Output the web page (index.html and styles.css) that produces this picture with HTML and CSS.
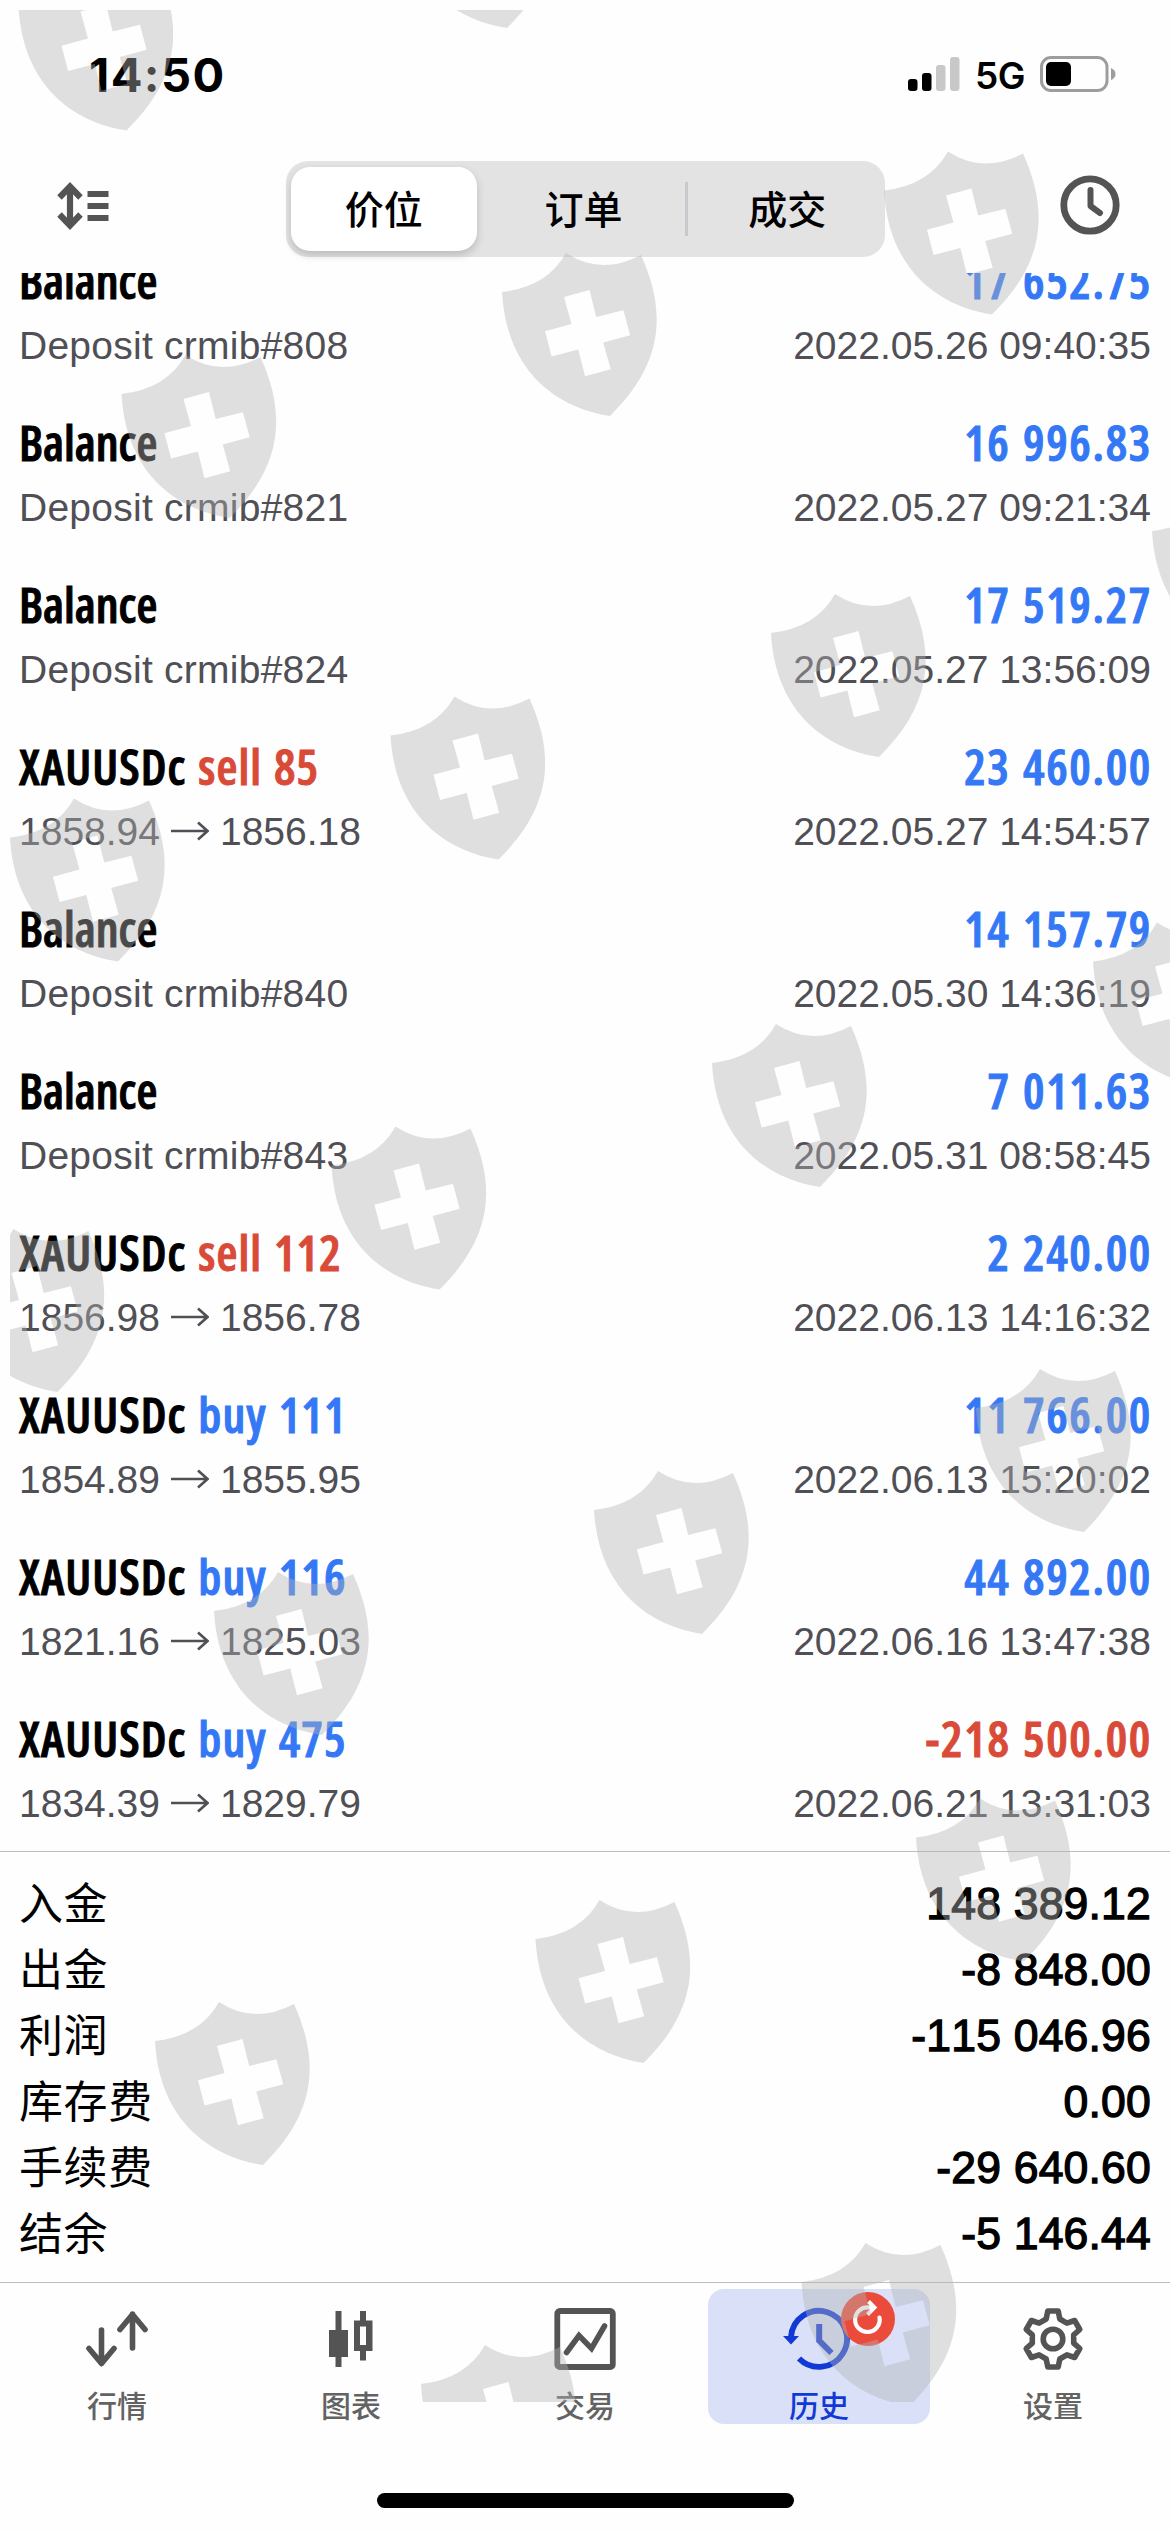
FILE: index.html
```html
<!DOCTYPE html>
<html lang="zh-CN">
<head>
    <meta charset="UTF-8">
    <meta name="viewport" content="width=device-width, initial-scale=1.0">
    <title>历史</title>
    <link rel="stylesheet" href="styles.css">
</head>
<body>
    <div class="screen">
        <div class="status-bar">
            <span class="time">14:50</span>
            <div class="status-right">
                <svg class="signal" width="52" height="34" viewBox="0 0 52 34">
                    <rect x="0" y="22" width="9.5" height="12" rx="3"/>
                    <rect x="14" y="16" width="9.5" height="18" rx="3"/>
                    <rect class="off" x="28" y="8" width="9.5" height="26" rx="3"/>
                    <rect class="off" x="42" y="0" width="9.5" height="34" rx="3"/>
                </svg>
                <span class="network">5G</span>
                <svg class="battery" width="76" height="36" viewBox="0 0 76 36">
                    <rect x="1.5" y="1.5" width="65.5" height="33" rx="9.5" fill="none" stroke="#9d9d9d" stroke-width="3"/>
                    <rect x="6" y="6" width="25" height="24" rx="5"/>
                    <path d="M71 12 Q75.5 14 75.5 18 Q75.5 22 71 24 Z" fill="#9d9d9d"/>
                </svg>
            </div>
        </div>

        <div class="toolbar">
            <svg class="sort-icon" width="54" height="50" viewBox="0 0 54 50">
                <path d="M13 5 V45 M2.5 16.5 L13 5.5 L23.5 16.5 M2.5 33.5 L13 44.5 L23.5 33.5" fill="none" stroke="#545454" stroke-width="6.2"/>
                <path d="M30.5 10 h21 v6 h-21 z M30.5 22 h21 v6 h-21 z M30.5 34 h21 v6 h-21 z" fill="#545454"/>
            </svg>
            <div class="segments">
                <div class="segment selected">价位</div>
                <div class="segment">订单</div>
                <div class="divider"></div>
                <div class="segment">成交</div>
            </div>
            <svg class="clock-icon" width="60" height="60" viewBox="0 0 60 60">
                <circle cx="30" cy="30" r="26.2" fill="none" stroke="#545454" stroke-width="6.8"/>
                <path d="M30.5 15 V31 L40 38" fill="none" stroke="#545454" stroke-width="6" stroke-linecap="round" stroke-linejoin="round"/>
            </svg>
        </div>

        <div class="history">
            <div class="deal">
                <div class="line main"><span class="name">Balance</span><span class="amount">17 652.75</span></div>
                <div class="line sub"><span class="comment">Deposit crmib#808</span><span>2022.05.26 09:40:35</span></div>
            </div>
            <div class="deal">
                <div class="line main"><span class="name">Balance</span><span class="amount">16 996.83</span></div>
                <div class="line sub"><span class="comment">Deposit crmib#821</span><span>2022.05.27 09:21:34</span></div>
            </div>
            <div class="deal">
                <div class="line main"><span class="name">Balance</span><span class="amount">17 519.27</span></div>
                <div class="line sub"><span class="comment">Deposit crmib#824</span><span>2022.05.27 13:56:09</span></div>
            </div>
            <div class="deal">
                <div class="line main"><span class="name trade">XAUUSDc <b class="sell">sell 85</b></span><span class="amount">23 460.00</span></div>
                <div class="line sub"><span>1858.94<svg class="arrow" viewBox="0 0 38 20"><path d="M0 10 H36 M27 1.5 L36.5 10 L27 18.5"/></svg>1856.18</span><span>2022.05.27 14:54:57</span></div>
            </div>
            <div class="deal">
                <div class="line main"><span class="name">Balance</span><span class="amount">14 157.79</span></div>
                <div class="line sub"><span class="comment">Deposit crmib#840</span><span>2022.05.30 14:36:19</span></div>
            </div>
            <div class="deal">
                <div class="line main"><span class="name">Balance</span><span class="amount">7 011.63</span></div>
                <div class="line sub"><span class="comment">Deposit crmib#843</span><span>2022.05.31 08:58:45</span></div>
            </div>
            <div class="deal">
                <div class="line main"><span class="name trade">XAUUSDc <b class="sell">sell 112</b></span><span class="amount">2 240.00</span></div>
                <div class="line sub"><span>1856.98<svg class="arrow" viewBox="0 0 38 20"><path d="M0 10 H36 M27 1.5 L36.5 10 L27 18.5"/></svg>1856.78</span><span>2022.06.13 14:16:32</span></div>
            </div>
            <div class="deal">
                <div class="line main"><span class="name trade">XAUUSDc <b class="buy">buy 111</b></span><span class="amount">11 766.00</span></div>
                <div class="line sub"><span>1854.89<svg class="arrow" viewBox="0 0 38 20"><path d="M0 10 H36 M27 1.5 L36.5 10 L27 18.5"/></svg>1855.95</span><span>2022.06.13 15:20:02</span></div>
            </div>
            <div class="deal">
                <div class="line main"><span class="name trade">XAUUSDc <b class="buy">buy 116</b></span><span class="amount">44 892.00</span></div>
                <div class="line sub"><span>1821.16<svg class="arrow" viewBox="0 0 38 20"><path d="M0 10 H36 M27 1.5 L36.5 10 L27 18.5"/></svg>1825.03</span><span>2022.06.16 13:47:38</span></div>
            </div>
            <div class="deal">
                <div class="line main"><span class="name trade">XAUUSDc <b class="buy">buy 475</b></span><span class="amount loss">-218 500.00</span></div>
                <div class="line sub"><span>1834.39<svg class="arrow" viewBox="0 0 38 20"><path d="M0 10 H36 M27 1.5 L36.5 10 L27 18.5"/></svg>1829.79</span><span>2022.06.21 13:31:03</span></div>
            </div>
        </div>

        <div class="summary">
            <div class="total"><span class="label">入金</span><span class="value">148 389.12</span></div>
            <div class="total"><span class="label">出金</span><span class="value">-8 848.00</span></div>
            <div class="total"><span class="label">利润</span><span class="value">-115 046.96</span></div>
            <div class="total"><span class="label">库存费</span><span class="value">0.00</span></div>
            <div class="total"><span class="label">手续费</span><span class="value">-29 640.60</span></div>
            <div class="total"><span class="label">结余</span><span class="value">-5 146.44</span></div>
        </div>

        <div class="tab-bar">
            <div class="tab">
                <svg width="64" height="64" viewBox="-32 -32 64 64">
                    <path d="M-15.5 -9 V24 M-28 9.5 L-15.5 24.5 L-3 9.5 M15.5 9 V-25 M3 -9.5 L15.5 -24.5 L28 -9.5" fill="none" stroke="#545454" stroke-width="5.6" stroke-linecap="round" stroke-linejoin="round"/>
                </svg>
                <span>行情</span>
            </div>
            <div class="tab">
                <svg width="64" height="64" viewBox="-32 -32 64 64">
                    <path d="M-15.5 -28 h6 v19 h6.5 v27 h-6.5 v10 h-6 v-10 h-6.5 v-27 h6.5 z" fill="#545454"/>
                    <path d="M9 -28 h6 v9.5 h6.5 v30.5 h-6.5 v9.5 h-6 v-9.500 h-6 v-30.500 h6 z M9 -12.500 v18.500 h6 v-18.500 z" fill="#545454" fill-rule="evenodd"/>
                </svg>
                <span>图表</span>
            </div>
            <div class="tab">
                <svg width="64" height="64" viewBox="-32 -32 64 64">
                    <rect x="-27.7" y="-28" width="55.5" height="56" rx="2.5" fill="none" stroke="#545454" stroke-width="5.8"/>
                    <path d="M-18.5 13.5 L-6 -3.5 L6.5 9.5 L19.5 -13" fill="none" stroke="#545454" stroke-width="5.6" stroke-linecap="round"/>
                </svg>
                <span>交易</span>
            </div>
            <div class="tab active">
                <svg width="76" height="64" viewBox="-38 -32 76 64">
                    <path d="M-20 19.5 A28 28 0 1 0 -28 -2" fill="none" stroke="#1139d6" stroke-width="5.8"/>
                    <path d="M-36 -3 H-20 L-28 5.5 Z" fill="#1139d6"/>
                    <path d="M0.2 -15 V1.5 L12.5 14" fill="none" stroke="#1139d6" stroke-width="6"/>
                </svg>
                <svg class="badge" width="54" height="54" viewBox="-27 -27 54 54">
                    <circle r="27" fill="#ea4b3a"/>
                    <path d="M11.5 -1.5 A12.3 12.3 0 1 1 1 -11.5 H5" fill="none" stroke="#fff" stroke-width="4.2" stroke-linecap="round"/>
                    <path d="M0.5 -17.5 L6.5 -11.5 L-0.5 -4.5" fill="none" stroke="#fff" stroke-width="4"/>
                </svg>
                <span>历史</span>
            </div>
            <div class="tab">
                <svg width="64" height="64" viewBox="-32 -32 64 64">
                    <polygon points="-5.2,-28 5.2,-28 6.8,-20 13.9,-15.9 21.6,-18.5 26.8,-9.5 20.7,-4.1 20.7,4.1 26.8,9.5 21.6,18.5 13.9,15.9 6.8,20 5.2,28 -5.2,28 -6.8,20 -13.9,15.9 -21.6,18.5 -26.8,9.5 -20.7,4.1 -20.7,-4.1 -26.8,-9.5 -21.6,-18.5 -13.9,-15.9 -6.8,-20" fill="none" stroke="#545454" stroke-width="5.6" stroke-linejoin="round"/>
                    <circle r="9.8" fill="none" stroke="#545454" stroke-width="5.6"/>
                </svg>
                <span>设置</span>
            </div>
        </div>
        <div class="home-indicator"></div>
    </div>

    <!-- shield watermark over the whole screen -->
    <svg class="watermark" width="1160" height="2392" viewBox="10 10 1160 2392">
        <defs>
            <path id="shield" fill-rule="evenodd" d="M0 0 Q45 -5 64 -39 Q99 -16 139 -37 C167 25 158 75 108 124 C50 115 4 75 0 0 Z
                M62 5 L69.5 32 L43 39.2 L49.6 64.5 L76.3 57.4 L83 84.2 L108.7 77.3 L101.2 50.5 L128.2 43.2 L121.4 18.3 L94.2 24.9 L87.5 -1.9 Z"/>
        </defs>
        <use href="#shield" x="18.5" y="6.5"/>
        <use href="#shield" x="399" y="-96"/>
        <use href="#shield" x="884" y="190.5"/>
        <use href="#shield" x="502" y="292"/>
        <use href="#shield" x="121.5" y="394"/>
        <use href="#shield" x="1152" y="531"/>
        <use href="#shield" x="771" y="633"/>
        <use href="#shield" x="390.5" y="735.5"/>
        <use href="#shield" x="10" y="837.5"/>
        <use href="#shield" x="1093" y="961.5"/>
        <use href="#shield" x="712" y="1063"/>
        <use href="#shield" x="331.5" y="1165.5"/>
        <use href="#shield" x="-50.5" y="1268"/>
        <use href="#shield" x="976" y="1408"/>
        <use href="#shield" x="594" y="1510"/>
        <use href="#shield" x="214" y="1611"/>
        <use href="#shield" x="916" y="1837.5"/>
        <use href="#shield" x="535.5" y="1939"/>
        <use href="#shield" x="155" y="2041"/>
        <use href="#shield" x="801.5" y="2282"/>
        <use href="#shield" x="421" y="2384"/>
    </svg>
</body>
</html>
```
FILE: styles.css
```css
body {
    margin: 0;
    background: #fefefe;
    color: #000;
    font-family: "Liberation Sans", "Noto Sans CJK SC", sans-serif;
    font-kerning: none;
}
.screen {
    width: 1170px;
    height: 2532px;
    display: flex;
    flex-direction: column;
    overflow: hidden;
}

/* status bar */
.status-bar {
    box-sizing: border-box;
    height: 141px;
    padding: 46px 54px 0 89px;
    display: flex;
    justify-content: space-between;
    align-items: flex-start;
    font-family: Inter, sans-serif;
}
.time {
    font-size: 47px;
    font-weight: 700;
    line-height: 57px;
    letter-spacing: 1.4px;
}
.status-right {
    display: flex;
    align-items: center;
    height: 56px;
}
.signal .off {
    fill: #c8c8c8;
}
.network {
    margin: 2px 15px 0 15px;
    font-size: 37px;
    font-weight: 600;
    letter-spacing: -0.5px;
}

/* toolbar */
.toolbar {
    box-sizing: border-box;
    height: 132px;
    padding: 20px 50px 0 57px;
    display: flex;
    justify-content: space-between;
    align-items: flex-start;
}
.sort-icon {
    margin-top: 20px;
}
.clock-icon {
    margin-top: 14px;
}
.segments {
    box-sizing: border-box;
    width: 599px;
    height: 96px;
    padding: 6px 5px;
    display: flex;
    align-items: center;
    background: #e3e3e3;
    border-radius: 22px;
}
.segment {
    width: 186px;
    height: 84px;
    margin-right: 14px;
    border-radius: 19px;
    text-align: center;
    font: 500 39px/80px "Noto Sans CJK SC", sans-serif;
}
.segment:last-child {
    margin: 0 0 0 6px;
}
.segment.selected {
    background: #fff;
    box-shadow: 0 4px 9px rgba(0, 0, 0, 0.18);
}
.divider {
    width: 3px;
    height: 54px;
    margin-left: -5px;
    background: #c8c8cd;
}

/* deals list, scrolled to the bottom */
.history {
    height: 1578px;
    display: flex;
    flex-direction: column;
    justify-content: flex-end;
    overflow: hidden;
}
.deal {
    box-sizing: border-box;
    flex: none;
    height: 162px;
    padding: 18px 19px 0;
}
.line {
    display: flex;
    justify-content: space-between;
}
.main {
    height: 66px;
    line-height: 64px;
    font-family: "Open Sans", sans-serif;
    font-size: 48px;
    font-weight: 600;
    font-stretch: 75%;
    word-spacing: 2px;
    -webkit-text-stroke: 1px;
}
.main b {
    font-weight: inherit;
}
.trade {
    letter-spacing: 1.1px;
}
.amount {
    margin-right: -1px;
    letter-spacing: 1.7px;
}
.amount, .buy {
    color: #3478f6;
}
.sell, .loss {
    color: #d94a38;
}
.sub {
    height: 62px;
    line-height: 62px;
    font-size: 39px;
    color: #4f4f55;
}
.comment {
    letter-spacing: 0.25px;
}
.arrow {
    width: 38px;
    height: 20px;
    margin: 0 11px 4px;
}
.arrow path {
    fill: none;
    stroke: #4f4f55;
    stroke-width: 2.6;
}

/* totals */
.summary {
    box-sizing: border-box;
    height: 431px;
    padding: 19px 19px 0;
    border-top: 1px solid #bdbdbd;
}
.total {
    height: 66px;
    display: flex;
    justify-content: space-between;
    line-height: 66px;
}
.label {
    font-family: "Noto Sans CJK SC", sans-serif;
    font-size: 44px;
    letter-spacing: 0.6px;
    line-height: 60px;
}
.value {
    font-size: 44.5px;
    letter-spacing: 0.2px;
    -webkit-text-stroke: 1.3px #000;
}

/* tabs */
.tab-bar {
    height: 210px;
    display: flex;
    border-top: 1px solid #bdbdbd;
}
.tab {
    position: relative;
    box-sizing: border-box;
    width: 222px;
    height: 135px;
    margin: 6px 6px 0;
    padding-top: 18px;
    display: flex;
    flex-direction: column;
    align-items: center;
    border-radius: 16px;
    color: #636363;
    font: 500 30px/40px "Noto Sans CJK SC", sans-serif;
}
.tab svg {
    flex: none;
}
.tab span {
    margin-top: 13px;
}
.tab.active {
    background: #d9e0f8;
    color: #1139d6;
}
.badge {
    position: absolute;
    left: 133px;
    top: 3px;
}
.home-indicator {
    width: 417px;
    height: 15px;
    margin-left: 377px;
    border-radius: 8px;
    background: #000;
}

.watermark {
    position: absolute;
    left: 10px;
    top: 10px;
    fill: rgba(179, 179, 179, 0.41);
    pointer-events: none;
}
```
